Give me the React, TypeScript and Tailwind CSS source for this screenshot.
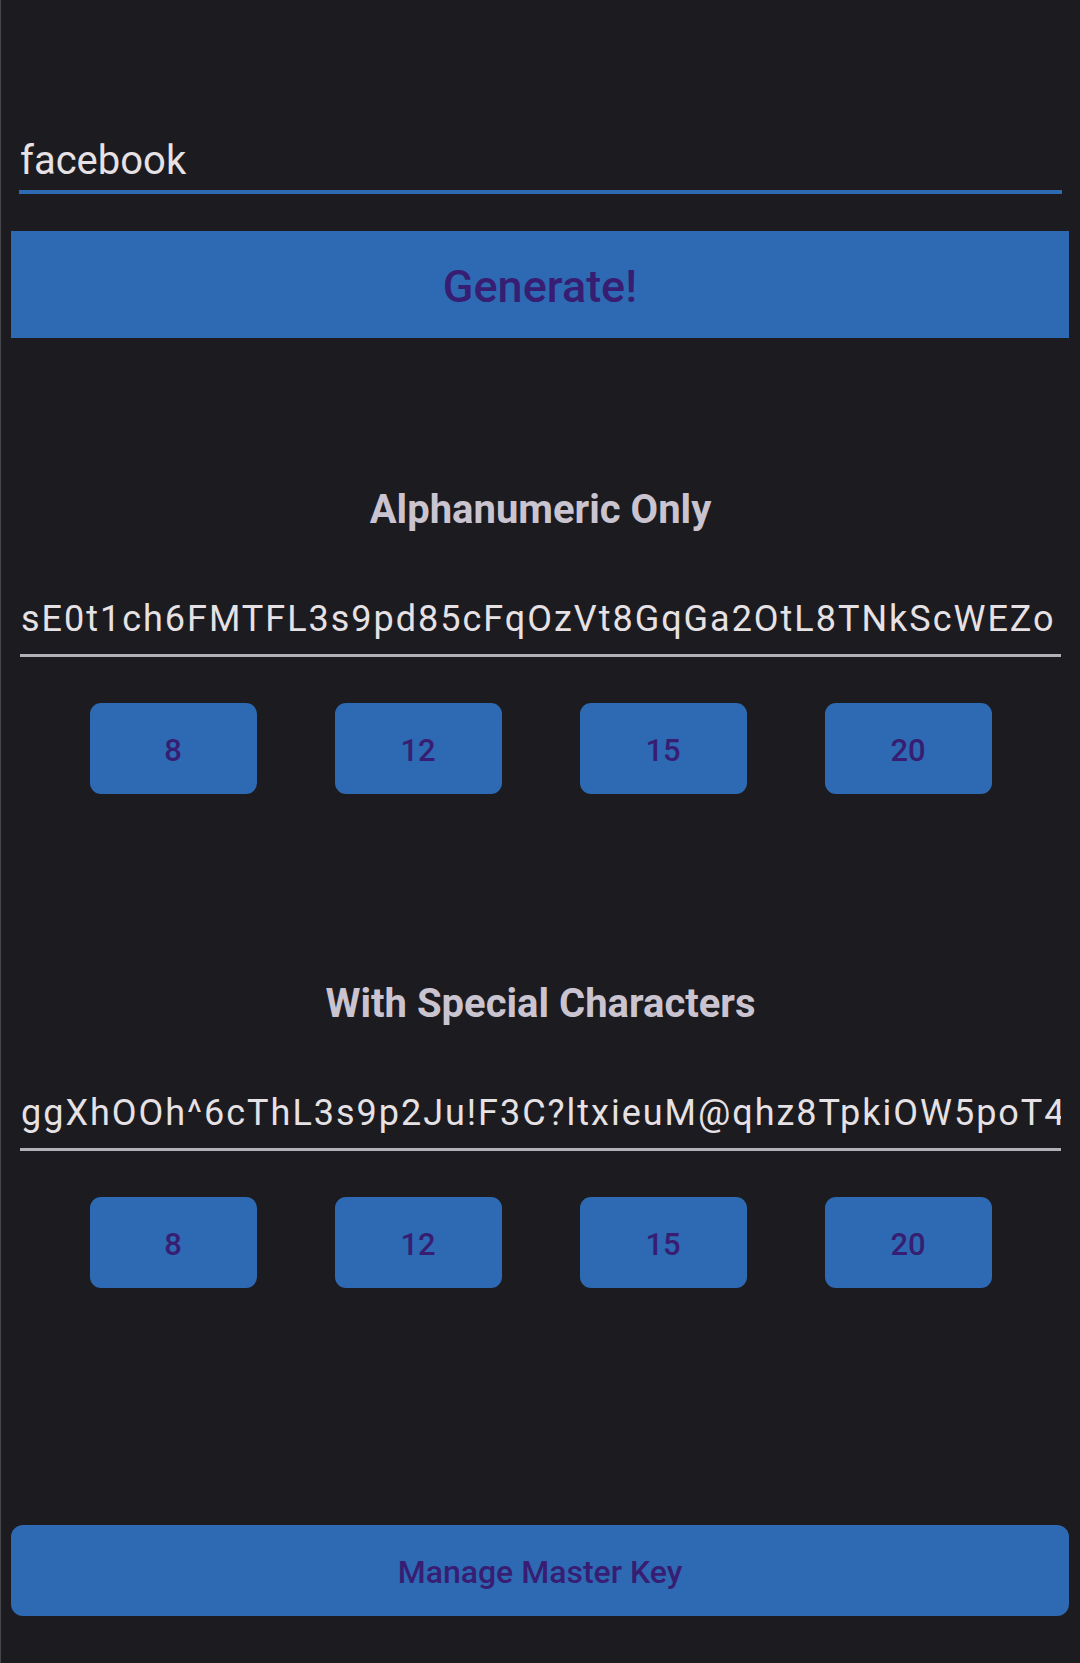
import React from 'react';

const lengths = [8, 12, 15, 20];

function LengthButtons() {
    return (
        <div className="mt-[46px] flex justify-center gap-[78px]">
            {lengths.map((n) => (
                <button
                    key={n}
                    className="w-[167px] h-[91px] pt-[5px] rounded-[11px] bg-[#2d6ab3] text-[#381e72] text-[31px] font-medium flex items-center justify-center"
                >
                    {n}
                </button>
            ))}
        </div>
    );
}

function PasswordSection({ title, value, top }: { title: string; value: string; top: string }) {
    return (
        <div className={top}>
            <h2 className="h-[44px] leading-[44px] text-[40px] font-bold text-center text-[#cac4d0]">{title}</h2>
            <div className="mt-[67px] mx-[19px]">
                <div className="h-[40px] leading-[40px] text-[36px] tracking-[0.055em] text-[#e6e1e5] whitespace-nowrap overflow-hidden pl-[1px]">
                    {value}
                </div>
                <div className="mt-[15px] h-[3px] bg-[#b3b0b7]" />
            </div>
            <LengthButtons />
        </div>
    );
}

export default function App() {
    return (
        <div
            className="w-[1080px] h-[1663px] bg-[#1c1b1f] border-l border-[#46454b] overflow-hidden"
            style={{ fontFamily: 'Roboto, "Noto Sans", sans-serif' }}
        >
            {/* site name field */}
            <div className="pt-[137px] mx-[18px]">
                <div className="h-[48px] leading-[48px] text-[40px] text-[#e6e1e5] pl-[1px]">facebook</div>
                <div className="mt-[5px] h-[4px] bg-[#2d6ab3]" />
            </div>

            <button className="mt-[37px] ml-[10px] w-[1058px] h-[107px] pt-[4px] bg-[#2d6ab3] text-[#381e72] text-[45px] font-medium flex items-center justify-center">
                Generate!
            </button>

            <PasswordSection
                title="Alphanumeric Only"
                value="sE0t1ch6FMTFL3s9pd85cFqOzVt8GqGa2OtL8TNkScWEZo"
                top="mt-[150px]"
            />

            <PasswordSection
                title="With Special Characters"
                value="ggXhOOh^6cThL3s9p2Ju!F3C?ltxieuM@qhz8TpkiOW5poT4"
                top="mt-[188px]"
            />

            <button className="mt-[237px] ml-[10px] w-[1058px] h-[91px] pt-[3px] rounded-[12px] bg-[#2d6ab3] text-[#381e72] text-[32px] font-medium flex items-center justify-center">
                Manage Master Key
            </button>
        </div>
    );
}
